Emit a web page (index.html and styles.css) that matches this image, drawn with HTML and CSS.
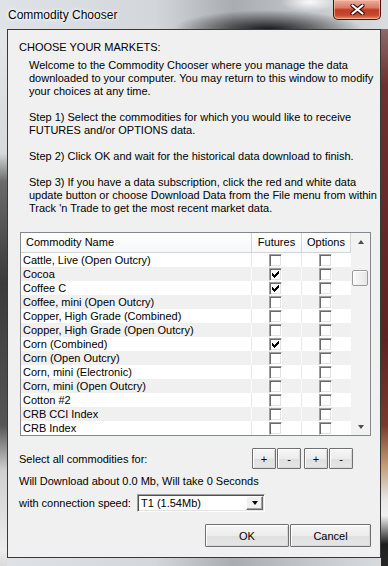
FILE: index.html
```
<!DOCTYPE html>
<html lang="en">

<head>
    <meta charset="UTF-8">
    <title>Commodity Chooser</title>
    <link rel="stylesheet" href="styles.css">
</head>

<body>
    <div class="window">
        <div class="titlebar">
            <span class="title">Commodity Chooser</span>
            <button class="close" type="button">
                <svg width="15" height="11" viewBox="0 0 15 11">
                    <path d="M2.5 1.5 L12.5 9.5 M12.5 1.5 L2.5 9.5" stroke="#3a0a04" stroke-width="4.2" stroke-linecap="round" fill="none" />
                    <path d="M2.5 1.5 L12.5 9.5 M12.5 1.5 L2.5 9.5" stroke="#fff" stroke-width="2.2" stroke-linecap="round" fill="none" />
                </svg>
            </button>
        </div>

        <div class="client">
            <h1 class="heading">CHOOSE YOUR MARKETS:</h1>
            <div class="intro">
                <p>Welcome to the Commodity Chooser where you manage the data<br>downloaded to your computer. You may return to this window to modify<br>your choices at any time.</p>
                <p>Step 1) Select the commodities for which you would like to receive<br>FUTURES and/or OPTIONS data.</p>
                <p>Step 2) Click OK and wait for the historical data download to finish.</p>
                <p>Step 3) If you have a data subscription, click the red and white data<br>update button or choose Download Data from the File menu from within<br>Track 'n Trade to get the most recent market data.</p>
            </div>

            <div class="listbox">
                <div class="grid">
                    <div class="list-head">
                        <span class="col-name">Commodity Name</span>
                        <span class="col-chk">Futures</span>
                        <span class="col-chk last">Options</span>
                    </div>
                    <div class="rows" id="rows"></div>
                </div>
                <div class="scrollbar">
                    <div class="sb-btn"><i class="arrow-up"></i></div>
                    <div class="sb-track"><div class="thumb"></div></div>
                    <div class="sb-btn"><i class="arrow-down"></i></div>
                </div>
            </div>

            <div class="select-row">
                <span class="grow">Select all commodities for:</span>
                <div class="pm-group">
                    <button class="btn pm" type="button">+</button>
                    <button class="btn pm" type="button">-</button>
                    <button class="btn pm gap" type="button">+</button>
                    <button class="btn pm" type="button">-</button>
                </div>
            </div>

            <div class="download-row">Will Download about 0.0 Mb, Will take 0 Seconds</div>

            <div class="speed-row">
                <span class="speed-label">with connection speed:</span>
                <div class="combo">
                    <span class="combo-text">T1 (1.54Mb)</span>
                    <span class="combo-btn"><i class="arrow-down dark"></i></span>
                </div>
            </div>

            <div class="actions">
                <button class="btn ok" type="button">OK</button>
                <button class="btn cancel" type="button">Cancel</button>
            </div>
        </div>
    </div>

    <script>
        (function () {
            const items = [
                ['Cattle, Live (Open Outcry)', 0, 0],
                ['Cocoa', 1, 0],
                ['Coffee C', 1, 0],
                ['Coffee, mini (Open Outcry)', 0, 0],
                ['Copper, High Grade (Combined)', 0, 0],
                ['Copper, High Grade (Open Outcry)', 0, 0],
                ['Corn (Combined)', 1, 0],
                ['Corn (Open Outcry)', 0, 0],
                ['Corn, mini (Electronic)', 0, 0],
                ['Corn, mini (Open Outcry)', 0, 0],
                ['Cotton #2', 0, 0],
                ['CRB CCI Index', 0, 0],
                ['CRB Index', 0, 0]
            ];
            const tick = '<svg width="11" height="11" viewBox="0 0 11 11" shape-rendering="crispEdges"><path fill="#000" d="M8 2h1v1h-1z M7 3h2v1h-2z M2 4h1v1h-1z M6 4h3v1h-3z M2 5h2v1h-2z M5 5h3v1h-3z M2 6h5v1h-5z M3 7h3v1h-3z M4 8h1v1h-1z"/></svg>';
            const box = function (on) {
                return '<span class="col-chk"><i class="box">' + (on ? tick : '') + '</i></span>';
            };
            let html = '';
            for (let i = 0; i < items.length; i++) {
                html += '<div class="row"><span class="col-name">' + items[i][0] + '</span>' + box(items[i][1]) + box(items[i][2]) + '</div>';
            }
            document.getElementById('rows').innerHTML = html;
        })();
    </script>
</body>

</html>
```

FILE: styles.css
```
body {
    margin: 0;
    font-family: "Liberation Sans", Arial, sans-serif;
    font-size: 11px;
    color: #000;
}

.window {
    width: 388px;
    height: 566px;
    overflow: hidden;
    display: flex;
    flex-direction: column;
    background:
        radial-gradient(ellipse 95px 20px at 268px 30px, rgba(10, 10, 10, 0.95), rgba(10, 10, 10, 0)),
        radial-gradient(ellipse 30px 10px at 310px 2px, rgba(255, 255, 255, 0.9), rgba(255, 255, 255, 0)),
        linear-gradient(to bottom, #8a6a6a, #6e2f2f 10%, #5e2222 55%, #7a3a2e 70%, #c09a74 77%, #e6e6e6 83%, #f0f0f0 86%, #1e1e1e 91%, #2a2a2a 96%, #9a9a9a) right 0 top 29px / 7px 100% no-repeat,
        linear-gradient(to bottom, #e4e6e8, #d6d8da 22%, #6a6a6a 27%, #3a3a3a 45%, #555 70%, #cfcfcf 78%, #ececec 92%, #bcbcbc) left 0 top 29px / 7px 100% no-repeat,
        linear-gradient(to right, #dfe3e8, #d3d7dc 40%, #a9acb0 60%, #c9ccd0 85%, #dadde0);
}

.titlebar {
    height: 29px;
    flex-shrink: 0;
    display: flex;
    align-items: flex-start;
}

.title {
    margin: 7px 0 0 8px;
    font-size: 12px;
    line-height: 16px;
    text-shadow: 0 0 5px #fff, 0 0 3px #fff, 0 0 1px #fff;
}

.close {
    margin-left: auto;
    margin-right: 7px;
    width: 48px;
    height: 20px;
    padding: 0;
    border: 1px solid #4a1208;
    border-top: none;
    border-radius: 0 0 5px 5px;
    background: linear-gradient(#eab0a2, #d87c66 40%, #c23a22 52%, #c64a30 80%, #e88c6a);
    box-shadow: inset 0 0 0 1px rgba(255, 200, 180, 0.6);
    display: flex;
    align-items: center;
    justify-content: center;
}

.close svg {
    display: block;
}

.client {
    margin: 0 7px;
    height: 529px;
    box-sizing: border-box;
    border: 1px solid #383838;
    background: #f0f0f0;
    padding: 11px 9px 0 11px;
}

.heading {
    margin: 0;
    font-size: 11px;
    font-weight: normal;
    line-height: 13px;
}

.intro {
    margin: 5px 0 0 10px;
}

.intro p {
    margin: 0 0 13px;
    line-height: 13px;
    white-space: nowrap;
}

.intro p:last-child {
    margin-bottom: 0;
}

/* list */

.listbox {
    margin: 17px 0 0 1px;
    width: 351px;
    height: 204px;
    box-sizing: border-box;
    border: 1px solid #828790;
    background: #fff;
    display: flex;
}

.grid {
    width: 330px;
}

.list-head {
    display: flex;
    height: 20px;
    box-sizing: border-box;
    border-bottom: 1px solid #d5d5d5;
    background: linear-gradient(#fff, #f6f7f9);
    line-height: 19px;
}

.list-head .col-name {
    padding-left: 5px;
}

.list-head .col-chk {
    justify-content: center;
    padding-left: 0;
    border-left-color: #d5d5d5;
}

.list-head .last {
    border-right: 1px solid #d5d5d5;
}

.col-name {
    width: 230px;
    box-sizing: border-box;
    padding-left: 2px;
    white-space: nowrap;
}

.col-chk {
    width: 50px;
    box-sizing: border-box;
    border-left: 1px solid #e9e9e9;
    padding-left: 17px;
    display: flex;
    align-items: center;
}

.row {
    display: flex;
    height: 14px;
    line-height: 14px;
}

.rows .row:nth-child(even) {
    background: #f0f0f0;
}

.rows .row:nth-child(even) .col-chk {
    border-left-color: #fbfbfb;
}

.box {
    width: 13px;
    height: 13px;
    box-sizing: border-box;
    border: 1px solid;
    border-color: #a0a0a0 #fff #fff #a0a0a0;
    box-shadow: inset 1px 1px #696969, inset -1px -1px #e3e3e3;
    background: #fff;
}

.box svg {
    display: block;
}

.scrollbar {
    width: 19px;
    display: flex;
    flex-direction: column;
    background: #f2f2f2;
}

.sb-btn {
    height: 17px;
    display: flex;
    align-items: center;
    justify-content: center;
}

.sb-track {
    flex: 1;
    padding: 20px 2px 0 1px;
}

.thumb {
    height: 16px;
    box-sizing: border-box;
    border: 1px solid #9a9a9a;
    border-radius: 2px;
    background: linear-gradient(to right, #fafafa, #e6e6e6);
    box-shadow: inset 1px 1px #fff;
}

.arrow-up,
.arrow-down {
    width: 0;
    height: 0;
    border-left: 3.5px solid transparent;
    border-right: 3.5px solid transparent;
}

.arrow-up {
    border-bottom: 4px solid #4d4d4d;
}

.arrow-down {
    border-top: 4px solid #4d4d4d;
}

.arrow-down.dark {
    border-top-color: #000;
}

/* bottom controls */

.select-row {
    display: flex;
    align-items: center;
    height: 21px;
    margin-top: 12px;
}

.grow {
    flex: 1;
}

.pm-group {
    display: flex;
    gap: 1px;
    margin-right: 18px;
}

.btn {
    font-family: "Liberation Sans", Arial, sans-serif;
    font-size: 11px;
    color: #000;
    padding: 0;
    box-sizing: border-box;
    border: 1px solid #707070;
    border-radius: 1px;
    background: linear-gradient(#f6f6f6, #ececec 50%, #dfdfdf 51%, #e6e6e6);
    box-shadow: inset 1px 1px #fff, inset -1px -1px #d8d8d8;
}

.pm {
    width: 24px;
    height: 21px;
}

.pm.gap {
    margin-left: 2px;
}

.download-row {
    margin-top: 6px;
    line-height: 13px;
}

.speed-row {
    display: flex;
    align-items: center;
    height: 18px;
    margin-top: 6px;
}

.speed-label {
    width: 118px;
}

.combo {
    width: 128px;
    height: 18px;
    box-sizing: border-box;
    border: 1px solid;
    border-color: #a0a0a0 #fff #fff #a0a0a0;
    box-shadow: inset 1px 1px #505050, inset -1px -1px #e3e3e3;
    background: #fff;
    display: flex;
    align-items: center;
    padding: 1px 1px 1px 3px;
}

.combo-text {
    flex: 1;
    line-height: 14px;
}

.combo-btn {
    width: 17px;
    height: 14px;
    box-sizing: border-box;
    border: 1px solid;
    border-color: #fff #696969 #696969 #fff;
    box-shadow: inset -1px -1px #a0a0a0;
    background: #f0f0f0;
    display: flex;
    align-items: center;
    justify-content: center;
}

.actions {
    display: flex;
    justify-content: flex-end;
    gap: 1px;
    margin-top: 12px;
}

.ok,
.cancel {
    height: 23px;
}

.ok {
    width: 84px;
}

.cancel {
    width: 81px;
}
```
